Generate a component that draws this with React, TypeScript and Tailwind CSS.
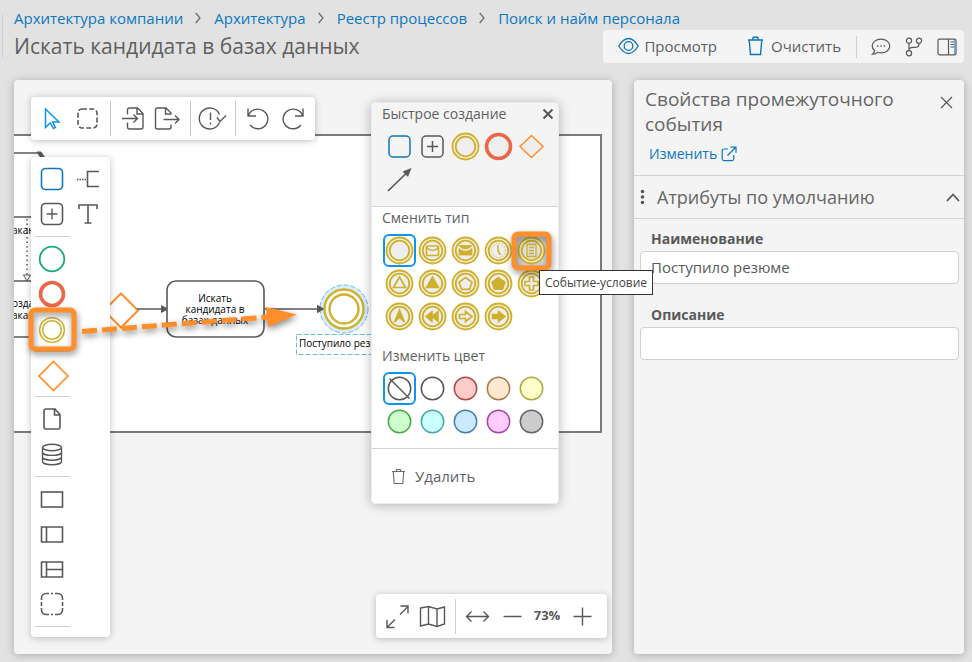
import { useState } from "react";
import type { ReactNode } from "react";

const GOLD = "#cfb02c";
const GREY = "#585858";
const BLUE = "#0d77bf";
const ORANGE = "#ff8e2b";
const RED = "#ea6748";

function Glyph({ size = 35, children }: { size?: number; children: ReactNode }) {
  return (
    <svg width={size} height={size} viewBox={`0 0 ${size} ${size}`} fill="none" stroke={GREY} strokeWidth="1.4" aria-hidden="true">
      {children}
    </svg>
  );
}

function ToolButton({ label, children }: { label: string; children: ReactNode }) {
  return (
    <button type="button" aria-label={label} className="flex h-[35px] w-[35px] items-center justify-center">
      <Glyph>{children}</Glyph>
    </button>
  );
}

function Cell({ label, selected = false, children }: { label: string; selected?: boolean; children: ReactNode }) {
  return (
    <button
      type="button"
      aria-label={label}
      className={selected ? "h-[33px] w-[33px] rounded-md border-2 border-[#0f95ee]" : "h-[33px] w-[33px]"}
    >
      <svg
        className={selected ? "-m-0.5" : ""}
        width="33"
        height="33"
        viewBox="0 0 33 33"
        fill="none"
        stroke={GREY}
        strokeWidth="1.5"
        aria-hidden="true"
      >
        {children}
      </svg>
    </button>
  );
}

function EventRing({ children, fill = "#eeeeee" }: { children?: ReactNode; fill?: string }) {
  return (
    <g stroke={GOLD}>
      <circle cx="16.5" cy="16.5" r="13" fill="#f3efdd" strokeWidth="1.8" />
      <circle cx="16.5" cy="16.5" r="9.8" fill={fill} strokeWidth="1.8" />
      {children}
    </g>
  );
}

const Vertical = () => <span className="ml-[5px] mr-1 h-[35px] w-px bg-[#cfcfcf]" />;
const Horizontal = () => <hr className="mt-1 mb-[5px] w-[35px] border-t border-[#cfcfcf]" />;

function Breadcrumbs() {
  const parts = ["Архитектура компании", "Архитектура", "Реестр процессов", "Поиск и найм персонала"];
  return (
    <nav aria-label="Навигация" className="flex h-[22px] items-center pb-[2px] text-[15px] leading-5 text-[#0d77bf]">
      {parts.map((part, i) => (
        <span key={part} className="flex items-center">
          {i > 0 && (
            <svg className="ml-3 mr-[13px]" width="6" height="12" viewBox="0 0 6 12" fill="none" stroke="#6a6a6a" strokeWidth="1.2">
              <path d="M.7 1l4.3 5-4.3 5" />
            </svg>
          )}
          <a href="#top">{part}</a>
        </span>
      ))}
    </nav>
  );
}

function HeaderActions() {
  return (
    <div className="flex h-[33px] items-center rounded bg-[#f4f4f4] text-[15px] text-[#5f5f5f]">
      <button type="button" className="ml-[15px] flex items-center gap-[5px] pb-px">
        <svg width="21" height="18" viewBox="0 0 21 18" fill="none" stroke={BLUE} strokeWidth="1.3">
          <path d="M.8 9C4 3.8 7 1.5 10.500 1.500S17 3.800 20.200 9C17 14.200 14 16.500 10.500 16.500S4 14.200.8 9z" />
          <circle cx="10.500" cy="9" r="4.300" />
        </svg>
        Просмотр
      </button>
      <button type="button" className="ml-[30px] flex items-center gap-[7px] pb-px">
        <svg width="17" height="20" viewBox="0 0 17 20" fill="none" stroke={BLUE} strokeWidth="1.400">
          <path d="M1 4h15M2.200 4l1.300 14.500h10L14.800 4M5.500 4l.8-2.800h4.400l.8 2.800" />
        </svg>
        Очистить
      </button>
      <span className="ml-[15px] h-[22px] w-px bg-[#cfcfcf]" />
      <button type="button" aria-label="Комментарии" className="ml-[13px]">
        <svg width="22" height="20" viewBox="0 0 22 20" fill="none" stroke={GREY} strokeWidth="1.2">
          <path d="M4.500 13.500C3 12.300 2.200 10.800 2.200 9c0-3.900 3.900-6.800 8.800-6.800S19.800 5.100 19.800 9s-3.900 6.900-8.800 6.900c-1.300 0-2.500-.2-3.500-.6-1.400 1.400-3 2-5 1.900 1.300-1 2-2.200 2-3.700z" />
          <path d="M7 9h1.300M10.400 9h1.300M13.800 9h1.300" strokeWidth="1.500" />
        </svg>
      </button>
      <button type="button" aria-label="Ветви" className="ml-[13px]">
        <svg width="18" height="20" viewBox="0 0 18 20" fill="none" stroke={GREY} strokeWidth="1.200">
          <circle cx="4" cy="3.800" r="2.600" />
          <circle cx="14" cy="3.800" r="2.600" />
          <circle cx="4" cy="16.200" r="2.600" />
          <path d="M4 6.400v7.200M14 6.400c0 3-1.500 4-4 4H8c-2 0-4 .8-4 3.200" />
        </svg>
      </button>
      <button type="button" aria-label="Панель свойств" className="ml-[14px] mr-[7px]">
        <svg width="20" height="18" viewBox="0 0 20 18" fill="none" stroke={GREY} strokeWidth="1.200">
          <rect x="1" y="1.200" width="18" height="15.600" rx="1.500" />
          <path d="M11.500 1.200v15.600M13.500 4h3.500M13.500 6.500h3.500M13.500 9h3.500" />
          <path d="M17.700 2v14" stroke="#5aa5d8" />
        </svg>
      </button>
    </div>
  );
}

function Diagram() {
  return (
    <svg
      className="absolute left-0 top-0"
      width="598"
      height="574"
      viewBox="14 80 598 574"
      fill="none"
      stroke={GREY}
      fontFamily='"Open Sans", "Noto Sans", sans-serif'
      fontSize="10"
    >
      <path d="M10 135H601V432H10z" fill="#fff" stroke="#7a7a7a" strokeWidth="2" />
      <path d="M14 153h25M14 217h18M14 281h18M14 337h18" strokeWidth="1.600" />
      <path d="M37 152h4l4 6h-4z" fill={GREY} />
      <path d="M27 219v58" strokeDasharray="1.500 3" strokeWidth="1.500" />
      <path d="M23.500 275l3.500 6 3.500-6z" />
      <g fill="#000" stroke="none">
        <text x="12" y="234">акан</text>
        <text x="12" y="307">озда</text>
        <text x="12" y="319">акан</text>
      </g>
      <path d="M121 293.500l17 17-17 17-17-17z" stroke={ORANGE} strokeWidth="2" />
      <path d="M137 309h24M264 309h54" strokeWidth="1.600" />
      <path d="M161 305l8 4-8 4zM317 305l8 4-8 4z" fill={GREY} stroke="none" />
      <rect x="167" y="281" width="97" height="56" rx="9" fill="#fff" strokeWidth="1.600" />
      <g fill="#000" stroke="none" textAnchor="middle">
        <text x="215" y="302">Искать</text>
        <text x="215" y="313">кандидата в</text>
        <text x="215" y="324">базах данных</text>
      </g>
      <circle cx="344" cy="309" r="24" fill="#d9edfa" stroke="#6cb9ea" strokeDasharray="5 2" />
      <path d="M317 305l8 4-8 4z" fill={GREY} stroke="none" />
      <circle cx="344" cy="309" r="19.500" fill="#fff" stroke={GOLD} strokeWidth="2.400" />
      <circle cx="344" cy="309" r="14.500" fill="#fff" stroke={GOLD} strokeWidth="2.400" />
      <rect x="296.500" y="334.500" width="95" height="20" stroke="#6cb9ea" strokeDasharray="5 2" />
      <text x="299" y="347" fill="#000" stroke="none">Поступило резюме</text>
    </svg>
  );
}

function Toolbar() {
  return (
    <div className="absolute left-[17px] top-[17px] flex h-[43px] items-center rounded bg-white pl-1 pr-[5px] shadow-[0_1px_7px_rgba(0,0,0,0.25)]">
      <ToolButton label="Выбор">
        <path d="M10.500 8v18.500l4.700-4.600 3.200 5.600 1.900-1-2.700-5.600H24z" stroke="#0f95ee" strokeWidth="1.500" />
      </ToolButton>
      <ToolButton label="Выделить область">
        <rect x="8" y="8" width="19" height="19" rx="4" strokeDasharray="5 2.200" strokeWidth="1.600" />
      </ToolButton>
      <Vertical />
      <ToolButton label="Импорт">
        <path d="M12.500 13.500V9c0-1.100.9-2 2-2h8l5.500 5.500V26c0 1.100-.9 2-2 2H14.500c-1.100 0-2-.9-2-2v-4.500M22 7.500V13h5.500M7 17.500h15.500M18.500 13.500l4 4-4 4" />
      </ToolButton>
      <ToolButton label="Экспорт">
        <path d="M21 13.500V12l-5-5H7.500c-1.100 0-2 .9-2 2v17c0 1.100.9 2 2 2H19c1.100 0 2-.9 2-2v-2.500M15.500 7.500V13H21M13.500 18.500H29M25 14.500l4 4-4 4" />
      </ToolButton>
      <Vertical />
      <ToolButton label="Проверить">
        <path d="M24.500 13.500a10.500 10.500 0 1 0 0 8M15.500 11.500v7.500M15.500 21.500v2M22 16.500l3 4 6-6" />
      </ToolButton>
      <Vertical />
      <ToolButton label="Отменить">
        <path d="M8 7.500v7.500h8M8.500 14.500a10 9.800 0 1 1 1.500 9.500" />
      </ToolButton>
      <ToolButton label="Повторить">
        <path d="M28 7.500v7.500h-8M27.500 14.500a10 9.800 0 1 0-1.500 9.500" />
      </ToolButton>
    </div>
  );
}

function Palette() {
  return (
    <div className="absolute left-[17px] top-[77px] flex h-[480px] w-[79px] flex-col rounded bg-white pl-1 pt-[5px] shadow-[0_1px_7px_rgba(0,0,0,0.25)]">
      <div className="grid grid-cols-[35px_35px]">
        <ToolButton label="Задача">
          <rect x="6.500" y="6.500" width="21" height="21" rx="4" stroke={BLUE} strokeWidth="1.600" />
        </ToolButton>
        <ToolButton label="Аннотация">
          <path d="M29 9.500H17.500v15H29" strokeWidth="1.600" />
          <path d="M7 17.500h10" strokeDasharray="1.500 1" />
        </ToolButton>
        <ToolButton label="Подпроцесс">
          <rect x="6.500" y="6.500" width="21" height="21" rx="4" strokeWidth="1.600" />
          <path d="M17 11.500v11M11.500 17h11" />
        </ToolButton>
        <ToolButton label="Текст">
          <path d="M9 12V8h18v4M18 8v18M14.500 26h7" strokeWidth="1.600" />
        </ToolButton>
      </div>
      <Horizontal />
      <ToolButton label="Начальное событие">
        <circle cx="17" cy="17" r="12.300" stroke="#1bab76" strokeWidth="1.800" />
      </ToolButton>
      <ToolButton label="Конечное событие">
        <circle cx="17" cy="17" r="11.500" stroke={RED} strokeWidth="3.600" />
      </ToolButton>
      <ToolButton label="Промежуточное событие">
        <circle cx="17" cy="18" r="12.300" stroke={GOLD} strokeWidth="1.600" />
        <circle cx="17" cy="18" r="9.300" stroke={GOLD} strokeWidth="1.600" />
      </ToolButton>
      <Horizontal />
      <ToolButton label="Шлюз">
        <path d="M18.500 4.500L33 19 18.500 33.500 4 19z" stroke={ORANGE} strokeWidth="1.700" />
      </ToolButton>
      <Horizontal />
      <ToolButton label="Объект данных">
        <path d="M11 7h9l5 5.500V25c0 1.400-.6 2-2 2H11c-1.400 0-2-.6-2-2V9c0-1.400.6-2 2-2zM19.500 7v6H25" strokeWidth="1.600" />
      </ToolButton>
      <ToolButton label="Хранилище данных">
        <ellipse cx="17" cy="10.500" rx="9.500" ry="3.200" />
        <path d="M7.500 10.500v14c0 1.800 4.200 3.200 9.500 3.200s9.500-1.400 9.500-3.200v-14M7.500 15.200c0 1.800 4.200 3.200 9.500 3.200s9.500-1.400 9.500-3.200M7.500 20c0 1.800 4.200 3.200 9.500 3.200s9.500-1.400 9.500-3.200" />
      </ToolButton>
      <Horizontal />
      <ToolButton label="Пул">
        <rect x="6.500" y="10" width="21" height="15" strokeWidth="1.600" />
      </ToolButton>
      <ToolButton label="Пул с заголовком">
        <path d="M6.500 10h21v15h-21zM11.500 10v15" strokeWidth="1.600" />
      </ToolButton>
      <ToolButton label="Пул с дорожками">
        <path d="M6.500 10h21v15h-21zM11.500 10v15M11.500 17.500h16" strokeWidth="1.600" />
      </ToolButton>
      <ToolButton label="Группа">
        <path
          d="M6.500 13v-2c0-2.500 2-4.500 4.500-4.500h3M16 6.500h2M20 6.500h3c2.500 0 4.500 2 4.500 4.500v2M27.500 15v4M27.500 21v2c0 2.500-2 4.500-4.500 4.500h-3M18 27.500h-2M14 27.500h-3c-2.500 0-4.500-2-4.500-4.500v-2M6.500 19v-4"
          strokeWidth="1.600"
        />
      </ToolButton>
      <Horizontal />
    </div>
  );
}

const swatches = [
  ["Белый", "#ffffff", "#555555"],
  ["Красный", "#ffcccc", "#b04a4a"],
  ["Оранжевый", "#ffe8d0", "#ae7b48"],
  ["Жёлтый", "#ffffcc", "#abab45"],
  ["Зелёный", "#ccffcc", "#48a848"],
  ["Бирюзовый", "#ccffff", "#48a8a8"],
  ["Голубой", "#cceaff", "#4582ab"],
  ["Пурпурный", "#ffccff", "#a845a8"],
  ["Серый", "#cccccc", "#666666"],
];

function ElementMenu() {
  const heading = "h-[22px] text-sm leading-[22px] text-[#5f5f5f]";
  const grid = "ml-px grid grid-cols-[repeat(5,33px)]";
  return (
    <section className="absolute left-[357px] top-[22px] w-[188px] overflow-hidden rounded border border-[#ececec] bg-white shadow-[0_1px_12px_rgba(0,0,0,0.28)]">
      <div className="border-b border-[#d3d3d3] bg-[#f4f4f4] px-[10px] pb-[10px]">
        <div className="flex items-center justify-between">
          <h2 className={heading}>Быстрое создание</h2>
          <button type="button" aria-label="Закрыть меню" className="-mr-[6px]">
            <svg width="12" height="12" viewBox="0 0 12 12" stroke="#555" strokeWidth="1.900">
              <path d="M1.500 1.500l9 9M10.500 1.500l-9 9" />
            </svg>
          </button>
        </div>
        <div className={`${grid} mt-[5px]`}>
          <Cell label="Добавить задачу">
            <rect x="6" y="6" width="21" height="21" rx="4" stroke={BLUE} />
          </Cell>
          <Cell label="Добавить подпроцесс">
            <rect x="6" y="6" width="21" height="21" rx="4" />
            <path d="M16.500 11v11M11 16.500h11" />
          </Cell>
          <Cell label="Добавить промежуточное событие">
            <EventRing />
          </Cell>
          <Cell label="Добавить конечное событие">
            <circle cx="16.500" cy="16.500" r="12" fill="#eee" stroke={RED} strokeWidth="3.600" />
          </Cell>
          <Cell label="Добавить шлюз">
            <path d="M16.500 5.500l11.500 11-11.500 11L5 16.500z" fill="#eee" stroke={ORANGE} />
          </Cell>
          <Cell label="Соединить">
            <path d="M5 28L24 9.500" strokeWidth="1.700" />
            <path d="M28.500 5l-3.500 9-5.500-5.500z" fill={GREY} stroke="none" />
          </Cell>
        </div>
      </div>
      <div className="border-b border-[#d3d3d3] px-[10px] pb-[10px]">
        <h2 className={heading}>Сменить тип</h2>
        <div className={`${grid} mt-[5px]`}>
          <Cell label="Простое событие" selected>
            <EventRing />
          </Cell>
          <Cell label="Получение сообщения">
            <EventRing>
              <rect x="10.500" y="12" width="12" height="9.500" rx="1.500" strokeWidth="1.700" />
              <path d="M10.500 13.500c3.500 4 8.500 4 12 0" strokeWidth="1.700" />
            </EventRing>
          </Cell>
          <Cell label="Отправка сообщения">
            <EventRing>
              <path d="M10 11.500h13c-3.500 4.500-9.500 4.500-13 0zM10 14.500c4 3.600 9 3.600 13 0V21H10z" fill={GOLD} strokeWidth=".8" />
            </EventRing>
          </Cell>
          <Cell label="Таймер">
            <EventRing>
              <circle cx="16.500" cy="16.500" r="7" strokeWidth=".8" strokeDasharray="1.500 1.500" />
              <path d="M16 11v6l2.500 4" />
            </EventRing>
          </Cell>
          <Cell label="Событие-условие">
            <rect x="1" y="1" width="31" height="31" fill="#d4d4d4" stroke="none" />
            <EventRing fill="#dedede">
              <path d="M12 10.500h9v12h-9zM14 13.500h5M14 16.500h5M14 19.500h5" strokeWidth="1.300" />
            </EventRing>
          </Cell>
          <Cell label="Получение сигнала">
            <EventRing>
              <path d="M16.500 10l6 10.500h-12z" strokeWidth="1.700" />
            </EventRing>
          </Cell>
          <Cell label="Отправка сигнала">
            <EventRing>
              <path d="M16.500 10l6 10.500h-12z" fill={GOLD} />
            </EventRing>
          </Cell>
          <Cell label="Множественное получение">
            <EventRing>
              <path d="M16.500 10.500l6.500 4.800-2.500 7h-8l-2.500-7z" strokeWidth="1.700" />
            </EventRing>
          </Cell>
          <Cell label="Множественная отправка">
            <EventRing>
              <path d="M16.500 10.500l6.500 4.800-2.500 7h-8l-2.500-7z" fill={GOLD} />
            </EventRing>
          </Cell>
          <Cell label="Параллельное событие">
            <EventRing>
              <path d="M14.500 10h4v4.500H23v4h-4.500V23h-4v-4.500H10v-4h4.500z" strokeWidth="1.700" />
            </EventRing>
          </Cell>
          <Cell label="Эскалация">
            <EventRing>
              <path d="M16.500 10l5 12-5-4.500-5 4.500z" fill={GOLD} />
            </EventRing>
          </Cell>
          <Cell label="Компенсация">
            <EventRing>
              <path d="M16 11.500v10l-6-5zM22 11.500v10l-6-5z" fill={GOLD} />
            </EventRing>
          </Cell>
          <Cell label="Получение ссылки">
            <EventRing>
              <path d="M10.500 14.500h6v-3l6.500 5-6.500 5v-3h-6z" strokeWidth="1.700" />
            </EventRing>
          </Cell>
          <Cell label="Отправка ссылки">
            <EventRing>
              <path d="M10.500 14.500h6v-3l6.500 5-6.500 5v-3h-6z" fill={GOLD} />
            </EventRing>
          </Cell>
        </div>
        <h2 className={`${heading} mt-3`}>Изменить цвет</h2>
        <div className={`${grid} mt-[5px]`}>
          <Cell label="Без цвета" selected>
            <circle cx="16.500" cy="16.500" r="11.200" />
            <path d="M6.500 6.500l20 20" />
          </Cell>
          {swatches.map(([name, fill, stroke]) => (
            <Cell key={name} label={name}>
              <circle cx="16.500" cy="16.500" r="11.200" fill={fill} stroke={stroke} />
            </Cell>
          ))}
        </div>
      </div>
      <button type="button" className="flex h-[54px] w-full items-center gap-[9px] pl-[19px] text-[15px] text-[#5f5f5f]">
        <svg width="15" height="17" viewBox="0 0 15 17" fill="none" stroke="#6a6a6a" strokeWidth="1.100">
          <path d="M1 3.500h13M2.200 3.500l1 12h8.600l1-12M5 3.500l.7-2h3.600l.7 2" />
        </svg>
        Удалить
      </button>
    </section>
  );
}

function ZoomBar() {
  return (
    <div className="absolute bottom-4 right-[5px] flex h-[44px] items-center rounded bg-white pl-1 pr-2 shadow-[0_1px_7px_rgba(0,0,0,0.25)]">
      <ToolButton label="Во весь экран">
        <path d="M20 15.500l8-8M20.500 7H28v7.500M15 20.500l-8 8M7 21v7.500h7.500" />
      </ToolButton>
      <ToolButton label="Карта">
        <path d="M5.500 9l8-1.500 8.500 2.500 7.500-2V25L22 27.500 13.500 25l-8 2zM13.500 7.500V25M22 10v17.500" />
      </ToolButton>
      <Vertical />
      <ToolButton label="По ширине">
        <path d="M7 17.500h21M11.500 12.500l-5 5 5 5M23.500 12.500l5 5-5 5" />
      </ToolButton>
      <ToolButton label="Уменьшить">
        <path d="M8.500 17.500h18" />
      </ToolButton>
      <output className="w-[34px] text-center text-[13px] font-bold text-[#5a5a5a]">73%</output>
      <ToolButton label="Увеличить">
        <path d="M9.500 17.500h18M18.500 8.500v18" />
      </ToolButton>
    </div>
  );
}

function Highlights() {
  return (
    <svg className="pointer-events-none absolute left-0 top-0 overflow-visible" width="598" height="574" viewBox="14 80 598 574" fill="none" aria-hidden="true">
      <g stroke={ORANGE} style={{ filter: "drop-shadow(1px 3px 3px rgba(0,0,0,.45))" }}>
        <rect x="31" y="310" width="43" height="39" rx="4" strokeWidth="5" />
        <rect x="514" y="234" width="35" height="34" rx="4" strokeWidth="5" />
        <path d="M82 331.500L268 317" strokeWidth="5" strokeDasharray="15 5" />
        <path d="M266 307l31 7.500-29 12.500z" fill={ORANGE} stroke="none" />
      </g>
    </svg>
  );
}

function Properties() {
  const [name, setName] = useState("Поступило резюме");
  const [description, setDescription] = useState("");
  const field =
    "h-[33px] w-full rounded border border-[#d0d0d0] bg-white px-[10px] pb-[2px] text-[15px] text-[#5a5a5a] outline-none";
  const label = "pl-[11px] text-sm leading-5 font-bold text-[#5a5a5a]";
  return (
    <aside className="w-[330px] shrink-0 rounded bg-[#f4f4f4] text-[#666] shadow-[0_1px_8px_rgba(0,0,0,0.25)]">
      <div className="h-24 border-b border-[#d3d3d3] pl-[11px] pr-[11px] pt-[7px]">
        <div className="flex items-start justify-between">
          <h2 className="w-[270px] text-[19px] leading-[25px]">Свойства промежуточного события</h2>
          <button type="button" aria-label="Закрыть" className="mt-[9px]">
            <svg width="13" height="13" viewBox="0 0 13 13" stroke={GREY} strokeWidth="1.200">
              <path d="M1 1l11 11M12 1L1 12" />
            </svg>
          </button>
        </div>
        <a href="#edit" className="mt-[7px] ml-1 flex items-center gap-1 text-sm leading-5 text-[#0d77bf]">
          Изменить
          <svg width="16" height="16" viewBox="0 0 16 16" fill="none" stroke={BLUE} strokeWidth="1.200">
            <path d="M7 3H3C1.900 3 1.200 3.700 1.200 4.800v8c0 1.100.7 1.800 1.800 1.800h8c1.100 0 1.800-.7 1.800-1.800V9M6.500 9.500l8-8M9.500 1.200H15v5.500" />
          </svg>
        </a>
      </div>
      <button type="button" aria-expanded="true" className="flex h-[43px] w-full items-center border-b border-[#d3d3d3] pl-[6px] pr-1 text-lg">
        <svg width="5" height="16" viewBox="0 0 5 16" fill={GREY}>
          <circle cx="2.500" cy="2.500" r="1.800" />
          <circle cx="2.500" cy="8" r="1.800" />
          <circle cx="2.500" cy="13.500" r="1.800" />
        </svg>
        <span className="ml-3">Атрибуты по умолчанию</span>
        <svg className="ml-auto" width="14" height="9" viewBox="0 0 14 9" fill="none" stroke={GREY} strokeWidth="1.800">
          <path d="M1 8l6-6.500L13 8" />
        </svg>
      </button>
      <form className="flex flex-col pr-[5px] pl-[6px] pt-[10px]">
        <label htmlFor="name" className={label}>Наименование</label>
        <input id="name" className={`${field} mt-[2px]`} value={name} onChange={(e) => setName(e.target.value)} />
        <label htmlFor="description" className={`${label} mt-[21px]`}>Описание</label>
        <input id="description" className={`${field} mt-[2px]`} value={description} onChange={(e) => setDescription(e.target.value)} />
      </form>
    </aside>
  );
}

export default function App() {
  return (
    <div className="flex min-h-screen flex-col bg-[#e2e2e2] font-['Open_Sans','Noto_Sans',sans-serif]">
      <header className="flex pr-2 pl-[2px]">
        <span className="mt-[14px] h-11 w-px bg-[#d0d0d0]" />
        <div className="min-w-0 flex-1 pt-2 pl-[11px]">
          <Breadcrumbs />
          <div className="flex items-center justify-between">
            <h1 className="text-[21px] leading-[33px] text-[#5f5f5f]">Искать кандидата в базах данных</h1>
            <HeaderActions />
          </div>
        </div>
      </header>
      <main className="flex flex-1 gap-[22px] pt-[17px] pr-2 pb-2 pl-[14px]">
        <div className="relative z-10 flex min-h-[574px] min-w-0 flex-1">
          <div className="relative flex-1 overflow-hidden rounded bg-[#f4f4f4] shadow-[0_1px_8px_rgba(0,0,0,0.25)]">
            <Diagram />
            <Toolbar />
            <Palette />
            <ElementMenu />
            <ZoomBar />
          </div>
          <Highlights />
          <div role="tooltip" className="absolute left-[525px] top-[190px] border border-[#333] bg-white px-[5px] text-xs leading-[23px] whitespace-nowrap text-[#444]">
            Событие-условие
          </div>
        </div>
        <Properties />
      </main>
    </div>
  );
}
